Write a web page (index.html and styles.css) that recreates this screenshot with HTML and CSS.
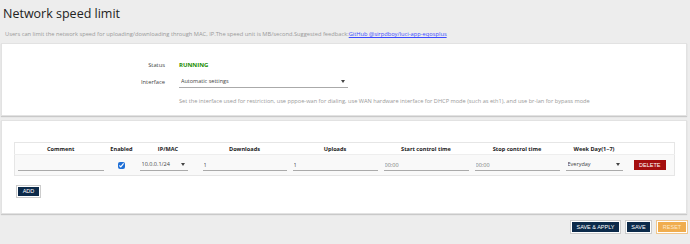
FILE: index.html
```html
<!doctype html>
<html lang="en">
<head>
    <meta charset="UTF-8">
    <title>Network speed limit</title>
    <link rel="stylesheet" href="styles.css">
</head>
<body>
<h2 class="title">Network speed limit</h2>
<div class="desc">Users can limit the network speed for uploading/downloading through MAC, IP.The speed unit is MB/second.Suggested feedback:<a href="#">GitHub @sirpdboy/luci-app-eqosplus</a></div>

<div class="card settings">
    <div class="row">
        <div class="label">Status</div>
        <div class="value running">RUNNING</div>
    </div>
    <div class="row">
        <div class="label">Interface</div>
        <div class="value">
            <div class="sel wide">
                <select><option>Automatic settings</option></select>
            </div>
        </div>
    </div>
    <div class="row help-row">
        <div class="label"></div>
        <div class="help">Set the interface used for restriction, use pppoe-wan for dialing, use WAN hardware interface for DHCP mode (such as eth1), and use br-lan for bypass mode</div>
    </div>
</div>

<div class="card rules">
    <table class="grid">
        <colgroup>
            <col style="width:92px"><col style="width:30px"><col style="width:63px">
            <col style="width:90px"><col style="width:91px"><col style="width:91px">
            <col style="width:91px"><col style="width:63px"><col style="width:49px">
        </colgroup>
        <thead>
        <tr>
            <th>Comment</th><th>Enabled</th><th>IP/MAC</th><th>Downloads</th><th>Uploads</th>
            <th>Start control time</th><th>Stop control time</th><th>Week Day(1~7)</th><th></th>
        </tr>
        </thead>
        <tbody>
        <tr>
            <td><input type="text" value=""></td>
            <td class="center"><input type="checkbox" checked></td>
            <td><div class="sel ip"><select><option>10.0.0.1/24</option></select></div></td>
            <td><input type="text" value="1"></td>
            <td><input type="text" value="1"></td>
            <td><input type="text" class="muted" value="00:00"></td>
            <td><input type="text" class="muted" value="00:00"></td>
            <td><div class="sel"><select><option>Everyday</option></select></div></td>
            <td class="center"><button class="btn red">DELETE</button></td>
        </tr>
        </tbody>
    </table>
    <button class="btn navy add">ADD</button>
</div>

<div class="actions">
    <button class="btn navy">SAVE &amp; APPLY</button>
    <button class="btn navy">SAVE</button>
    <button class="btn orange">RESET</button>
</div>
</body>
</html>
```
FILE: styles.css
```css
*{
    margin: 0;
    padding: 0;
    box-sizing: border-box;
}
body{
    background-color: #ededed;
    font-family: "Open Sans", "Noto Sans", sans-serif;
    color: #333;
    padding: 0 3px 0 1px;
    width: 690px;
    height: 244px;
    overflow: hidden;
}
.title{
    font-size: 12.5px;
    font-weight: normal;
    color: #222;
    padding: 5px 0 0 2px;
    line-height: 18px;
}
.desc{
    font-size: 5.73px;
    color: #999;
    padding: 6px 0 0 4px;
    line-height: 10px;
    height: 20px;
}
.desc a{
    color: #3b4bff;
    text-decoration: underline;
}
.card{
    background-color: #fff;
    border: 1px solid #e2e2e2;
    box-shadow: 0 1px 1px rgba(0,0,0,0.15);
}
.settings{
    height: 73px;
    padding-top: 13px;
}
.row{
    display: flex;
    align-items: center;
    height: 15px;
    margin-bottom: 2px;
}
.label{
    width: 163px;
    text-align: right;
    font-size: 5.8px;
    color: #444;
}
.value{
    margin-left: 14px;
    font-size: 6px;
}
.running{
    color: #1a8c00;
    font-weight: bold;
}
.help-row{
    margin-top: 4px;
}
.help{
    margin-left: 14px;
    font-size: 5.65px;
    color: #999;
}
.sel{
    position: relative;
    border-bottom: 1px solid #aaa;
    height: 12px;
    font-size: 5.5px;
}
.sel select{
    display: block;
    appearance: none;
    -webkit-appearance: none;
    border: none;
    background: transparent;
    font-family: inherit;
    font-size: 5.5px;
    line-height: 11px;
    color: #444;
    width: 100%;
    height: 11px;
    padding: 0 0 0 2px;
    outline: none;
}
.sel:after{
    content: "";
    position: absolute;
    right: 3px;
    top: 4px;
    border-left: 2px solid transparent;
    border-right: 2px solid transparent;
    border-top: 3px solid #444;
}
.sel.wide{
    width: 169px;
}
.sel.ip{
    width: 48px;
}
.rules{
    margin-top: 4px;
    height: 94px;
    padding: 21px 12px 0 12px;
}
.grid{
    width: 660px;
    table-layout: fixed;
    border-collapse: collapse;
    border: 1px solid #e6e6e6;
}
.grid th{
    font-size: 5.6px;
    font-weight: bold;
    color: #222;
    height: 12px;
    text-align: center;
    background-color: #fff;
}
.grid td{
    background-color: #f9f9f9;
    border-top: 1px solid #eee;
    height: 21px;
    padding: 0 3px;
    vertical-align: middle;
    font-size: 5.5px;
}
.center{
    text-align: center;
}
.grid input[type=text]{
    display: block;
    width: 100%;
    height: 12px;
    border: none;
    border-bottom: 1px solid #aaa;
    background: transparent;
    font-family: inherit;
    font-size: 5.5px;
    color: #444;
    padding-left: 1px;
    outline: none;
}
.grid input.muted{
    color: #777;
}
.grid input[type=checkbox]{
    width: 7px;
    height: 7px;
    accent-color: #1f6fd6;
    vertical-align: middle;
}
.btn{
    border: 1px solid #fff;
    outline: 1px solid #ccc;
    font-family: "Liberation Sans", sans-serif;
    font-size: 5.5px;
    color: #fff;
    height: 11px;
    padding: 0 4px;
    cursor: pointer;
}
.navy{
    background-color: #0c2a4a;
}
.red{
    background-color: #a50f0f;
    width: 32px;
    outline: none;
    border: none;
    height: 10px;
}
.orange{
    background-color: #f0ad4e;
    outline-color: #f0c890;
    color: #fde9cc;
}
.add{
    margin: 7px 0 0 3px;
    width: 23px;
}
.actions{
    display: flex;
    justify-content: flex-end;
    gap: 6px;
    padding-top: 7px;
}
.actions .btn{
    height: 12px;
}
.actions .btn:nth-child(1){
    width: 49px;
}
.actions .btn:nth-child(2){
    width: 25px;
}
.actions .btn:nth-child(3){
    width: 30px;
}
```
